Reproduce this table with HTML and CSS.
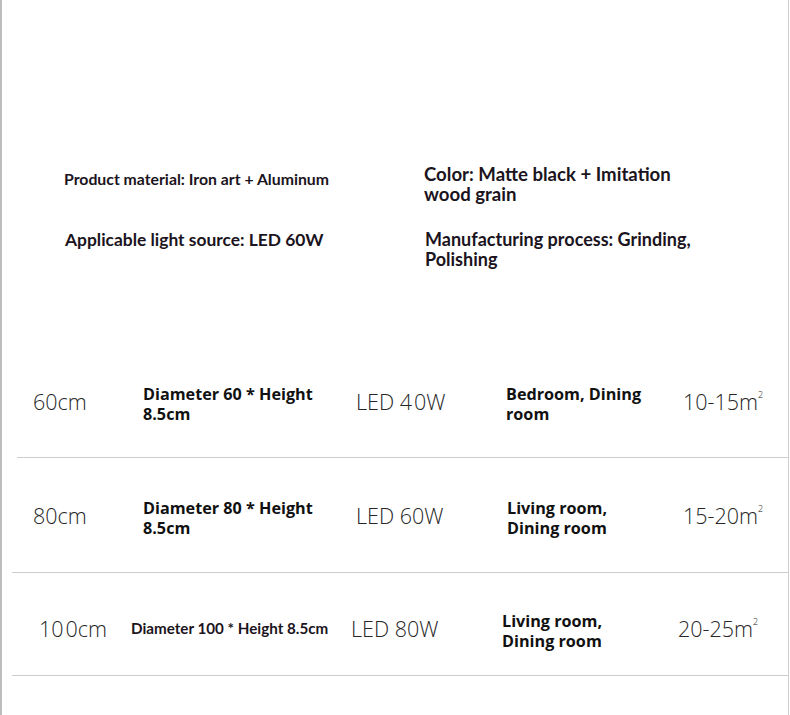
FILE: index.html
```html
<!DOCTYPE html>
<html>
<head>
<meta charset="utf-8">
<link rel="stylesheet" href="styles.css">
</head>
<body>
<div class="page">
  <section class="specs">
    <div class="spec spec-a">Product material: Iron art + Aluminum</div>
    <div class="spec spec-b">Color: Matte black + Imitation<br>wood grain</div>
    <div class="spec spec-c">Applicable light source: LED 60W</div>
    <div class="spec spec-d">Manufacturing process: Grinding,<br>Polishing</div>
  </section>
  <section class="table">
    <div class="row row-1">
      <div class="light">60cm</div>
      <div class="bold">Diameter 60 * Height<br>8.5cm</div>
      <div class="light">LED 4<span class="gap"></span>0W</div>
      <div class="bold">Bedroom, Dining<br>room</div>
      <div class="light">10-15m<sup>2</sup></div>
    </div>
    <div class="row row-2">
      <div class="light">80cm</div>
      <div class="bold">Diameter 80 * Height<br>8.5cm</div>
      <div class="light">LED 60W</div>
      <div class="bold">Living room,<br>Dining room</div>
      <div class="light">15-20m<sup>2</sup></div>
    </div>
    <div class="row row-3">
      <div class="light">10<span class="gap"></span>0cm</div>
      <div class="bold small">Diameter 100 * Height 8.5cm</div>
      <div class="light">LED 80W</div>
      <div class="bold">Living room,<br>Dining room</div>
      <div class="light">20-25m<sup>2</sup></div>
    </div>
  </section>
</div>
</body>
</html>
```

FILE: styles.css
```css
html, body {
  margin: 0;
  padding: 0;
  background: #fff;
}
.page {
  box-sizing: border-box;
  width: 789px;
  height: 715px;
  border-left: 2px solid #bdbdbd;
  border-right: 1px solid #cfcfcf;
  background: #fff;
  overflow: hidden;
}
.specs {
  display: grid;
  grid-template-columns: 360px 1fr;
  grid-template-rows: 66px auto;
  padding: 162px 0 0 62px;
  color: #1b1420;
  font-family: Lato, "Open Sans", sans-serif;
  font-weight: 700;
}
.spec {
  font-size: 18.6px;
  line-height: 20px;
}
.spec-a {
  font-size: 15.8px;
  padding-top: 7px;
}
.spec-b {
  padding-top: 2px;
}
.spec-c {
  font-size: 17.4px;
  padding-left: 1px;
  padding-top: 2px;
}
.spec-d {
  font-size: 18px;
  padding-left: 1px;
  padding-top: 1px;
}
.table {
  padding-top: 76px;
}
.row {
  display: grid;
  align-items: center;
  border-bottom: 1px solid #cdcdcd;
  color: #1b1420;
}
.row-1 {
  margin-left: 15px;
  width: 765px;
  height: 112px;
  padding-left: 16px;
  grid-template-columns: 110px 213px 150px 177px 1fr;
}
.row-2 {
  margin-left: 10px;
  width: 766px;
  height: 114px;
  padding-left: 21px;
  grid-template-columns: 110px 213px 151px 176px 1fr;
}
.row-3 {
  margin-left: 10px;
  width: 766px;
  height: 94px;
  padding-top: 8px;
  padding-left: 27px;
  grid-template-columns: 92px 220px 151px 176px 1fr;
}
.light {
  font-family: "Open Sans", sans-serif;
  font-weight: 300;
  font-size: 21.5px;
  color: #262626;
  white-space: nowrap;
}
.light sup {
  font-size: 9px;
  vertical-align: 12px;
  line-height: 0;
}
.gap {
  display: inline-block;
  width: 2px;
}
.bold {
  font-family: "Open Sans", sans-serif;
  font-weight: 700;
  font-size: 16.2px;
  line-height: 20px;
  color: #111;
  padding-top: 5px;
}
.bold.small {
  font-family: Lato, sans-serif;
  font-size: 15.2px;
  color: #1b1420;
  white-space: nowrap;
  padding-top: 0;
}
```
